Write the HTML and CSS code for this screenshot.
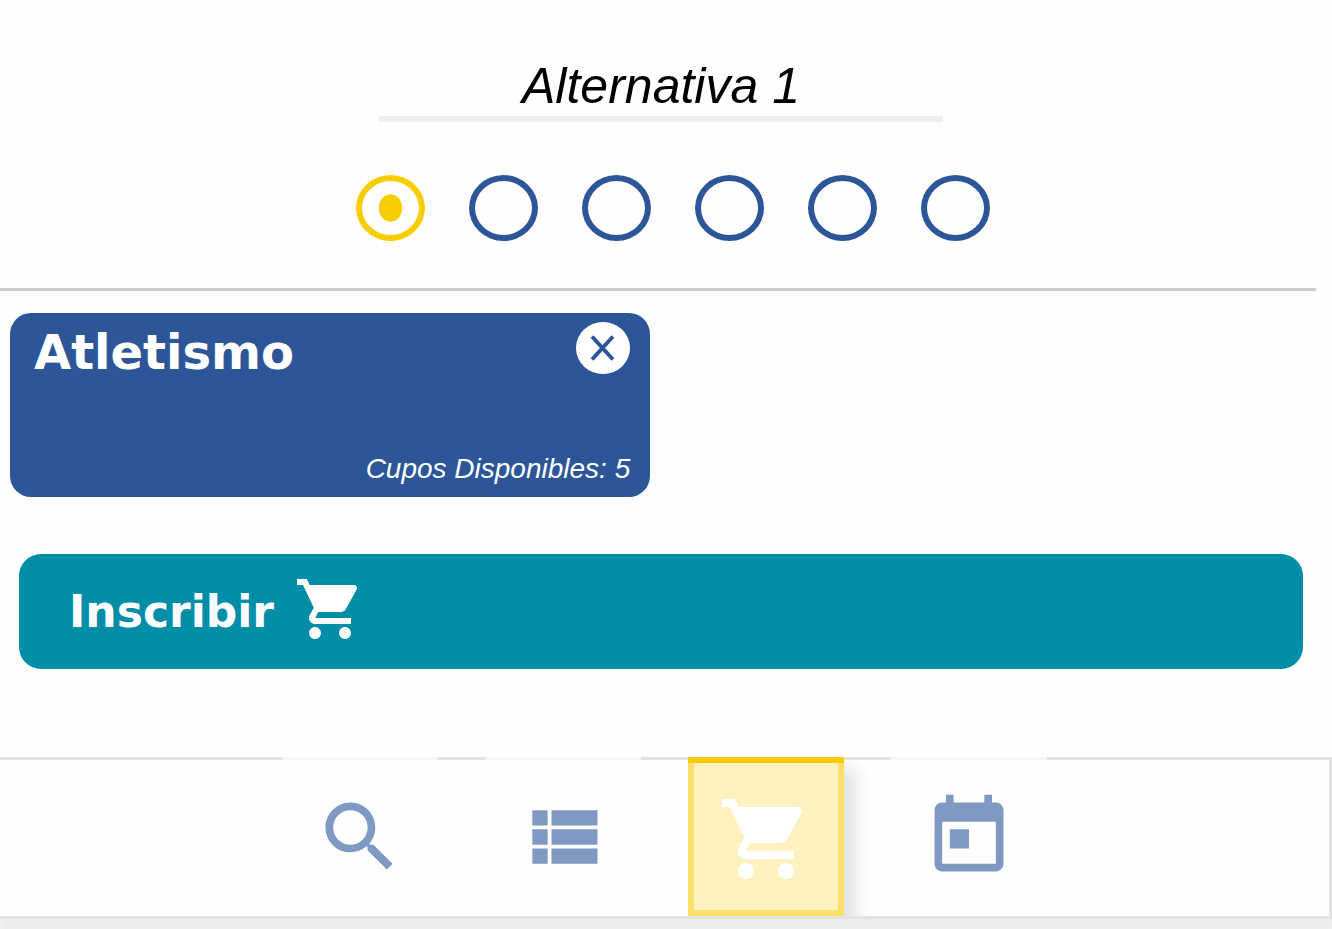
FILE: index.html
```html
<!DOCTYPE html>
<html lang="es">
<head>
<meta charset="utf-8">
<meta name="viewport" content="width=device-width, initial-scale=1">
<title>Alternativa 1</title>
<link rel="stylesheet" href="styles.css">
</head>
<body>
<main class="content">
  <header class="header">
    <h1 class="title">Alternativa 1</h1>
    <div class="pager" role="radiogroup" aria-label="Alternativas">
      <input class="dot" type="radio" name="alt" aria-label="Alternativa 1" checked>
      <input class="dot" type="radio" name="alt" aria-label="Alternativa 2">
      <input class="dot" type="radio" name="alt" aria-label="Alternativa 3">
      <input class="dot" type="radio" name="alt" aria-label="Alternativa 4">
      <input class="dot" type="radio" name="alt" aria-label="Alternativa 5">
      <input class="dot" type="radio" name="alt" aria-label="Alternativa 6">
    </div>
  </header>
  <section class="courses">
    <article class="card">
      <div class="card-top">
        <h2 class="card-name">Atletismo</h2>
        <button class="close" type="button" aria-label="Quitar">
          <svg viewBox="0 0 54 52" aria-hidden="true"><ellipse cx="27" cy="26" rx="27" ry="26" fill="#fff"/><path d="M16 14.500L37 37.500M37 14.500L16 37.500" stroke="#2c5697" stroke-width="4"/></svg>
        </button>
      </div>
      <p class="card-slots">Cupos Disponibles: 5</p>
    </article>
  </section>
  <button class="enroll" type="button">
    <span>Inscribir</span>
    <svg class="enroll-icon" viewBox="0 1 24 24" aria-hidden="true"><path fill="currentColor" d="M7 18c-1.100 0-1.990.9-1.990 2S5.900 22 7 22s2-.9 2-2-.9-2-2-2zM1 2v2h2l3.600 7.590-1.350 2.450c-.16.28-.25.61-.25.96 0 1.100.9 2 2 2h12v-2H7.420c-.14 0-.25-.11-.25-.25l.03-.12.9-1.630h7.450c.75 0 1.410-.41 1.750-1.030l3.580-6.490c.08-.14.12-.31.12-.48 0-.55-.45-1-1-1H5.210l-.94-2H1zm16 16c-1.100 0-1.990.9-1.990 2s.89 2 1.990 2 2-.9 2-2-.9-2-2-2z"/></svg>
  </button>
</main>
<nav class="tabs" aria-label="Principal">
  <a class="tab" href="#buscar" aria-label="Buscar">
    <svg class="icon" viewBox="0 0 24 24" aria-hidden="true"><path fill="currentColor" d="M15.500 14h-.79l-.28-.27C15.410 12.590 16 11.110 16 9.500 16 5.910 13.090 3 9.500 3S3 5.910 3 9.500 5.910 16 9.500 16c1.610 0 3.090-.59 4.230-1.570l.27.28v.79l5 4.990L20.490 19l-4.990-5zm-6 0C7.010 14 5 11.990 5 9.500S7.010 5 9.500 5 14 7.010 14 9.500 11.990 14 9.500 14z"/></svg>
  </a>
  <a class="tab" href="#lista" aria-label="Lista">
    <svg class="icon" viewBox="0 0 24 24" aria-hidden="true"><path fill="currentColor" d="M4 14h4v-4H4v4zm0 5h4v-4H4v4zM4 9h4V5H4v4zm5 5h12v-4H9v4zm0 5h12v-4H9v4zM9 5v4h12V5H9z"/></svg>
  </a>
  <a class="tab tab-active" href="#inscripcion" aria-label="Inscripción" aria-current="page">
    <svg class="icon icon-cart" viewBox="0 -1 24 24" aria-hidden="true"><path fill="currentColor" d="M7 18c-1.100 0-1.990.9-1.990 2S5.900 22 7 22s2-.9 2-2-.9-2-2-2zM1 2v2h2l3.600 7.590-1.350 2.450c-.16.28-.25.61-.25.96 0 1.100.9 2 2 2h12v-2H7.420c-.14 0-.25-.11-.25-.25l.03-.12.9-1.630h7.450c.75 0 1.410-.41 1.750-1.030l3.580-6.490c.08-.14.12-.31.12-.48 0-.55-.45-1-1-1H5.210l-.94-2H1zm16 16c-1.100 0-1.990.9-1.990 2s.89 2 1.990 2 2-.9 2-2-.9-2-2-2z"/></svg>
  </a>
  <a class="tab" href="#horario" aria-label="Horario">
    <svg class="icon" viewBox="0 0 24 24" aria-hidden="true"><path fill="currentColor" d="M19 3h-1V1h-2v2H8V1H6v2H5c-1.110 0-1.990.9-1.990 2L3 19c0 1.100.89 2 2 2h14c1.100 0 2-.9 2-2V5c0-1.100-.9-2-2-2zm0 16H5V8h14v11zM7 10h5v5H7z"/></svg>
  </a>
</nav>
</body>
</html>
```
FILE: styles.css
```css
* { box-sizing: border-box; }

body {
  margin: 0;
  min-height: 100vh;
  overflow: hidden;
  background: #fefefe;
  color: #000;
  font-family: "Liberation Sans", Arial, sans-serif;
}

button {
  border: 0;
  cursor: pointer;
  font: inherit;
}

.content {
  margin-right: 16px;
  padding-top: 56px;
}

.header {
  display: flex;
  flex-direction: column;
  align-items: center;
  gap: 53px;
  padding: 0 0 47px 6px;
  border-bottom: 3px solid #ccc;
}

.title {
  width: 43%;
  margin: 0;
  border-bottom: 6px solid #eee;
  font-size: 50px;
  font-style: italic;
  font-weight: 400;
  line-height: 60px;
  text-align: center;
}

.pager {
  display: flex;
  gap: 44px;
  padding-left: 24px;
}

.dot {
  appearance: none;
  width: 69px;
  height: 66px;
  margin: 0;
  border: 6px solid #2c5697;
  border-radius: 50%;
}

.dot:checked {
  border-color: #f8cd00;
  background: radial-gradient(ellipse 12px 14px, #f8cd00 95%, transparent 100%);
}

.courses {
  padding: 22px 10px 57px;
}

.card {
  display: flex;
  flex-direction: column;
  justify-content: space-between;
  width: 49.400%;
  min-height: 184px;
  padding: 9px 20px 12px 24px;
  border-radius: 21px;
  background: #2c5697;
  color: #fff;
}

.card-top {
  display: flex;
  justify-content: space-between;
}

.card-name {
  margin: 0;
  font-family: "DejaVu Sans", sans-serif;
  font-size: 48px;
  font-weight: 700;
  line-height: 60px;
}

.close {
  display: flex;
  width: 54px;
  height: 52px;
  padding: 0;
  background: none;
}

.card-slots {
  margin: 0;
  font-size: 28px;
  font-style: italic;
  line-height: 32px;
  text-align: right;
}

.enroll {
  display: flex;
  align-items: center;
  gap: 20px;
  width: calc(100% - 32px);
  height: 115px;
  margin: 0 13px 88px 19px;
  padding: 0 50px;
  border-radius: 22px;
  background: #008da8;
  color: #fff;
  font-family: "DejaVu Sans", sans-serif;
  font-size: 44px;
  font-weight: 700;
}

.enroll-icon {
  width: 72px;
  height: 72px;
}

.tabs {
  display: flex;
  justify-content: center;
  gap: 47px;
  height: 162px;
  border: 3px solid #e3e3e3;
  border-left: 0;
  box-shadow: 0 12px 12px 6px #ececec;
  clip-path: inset(0 0 -40px 0);
  background: #fefefe;
}

.tab {
  display: flex;
  align-items: center;
  justify-content: center;
  width: 156px;
  margin-top: -3px;
  padding-bottom: 3px;
  border-top: 3px solid #f6f6f6;
  color: #8099c2;
}

.tab-active {
  border: 0;
  box-shadow: inset 0 6px #f8cd00, inset 0 0 0 6px #fbe067, 12px 12px 15px #e2e2e2;
  background: #fdf1c0;
  clip-path: inset(0 -40px 0 0);
  color: #fff;
}

.icon {
  width: 92px;
  height: 92px;
}

.icon-cart {
  flex-shrink: 0;
  width: 96px;
  height: 96px;
}
```
